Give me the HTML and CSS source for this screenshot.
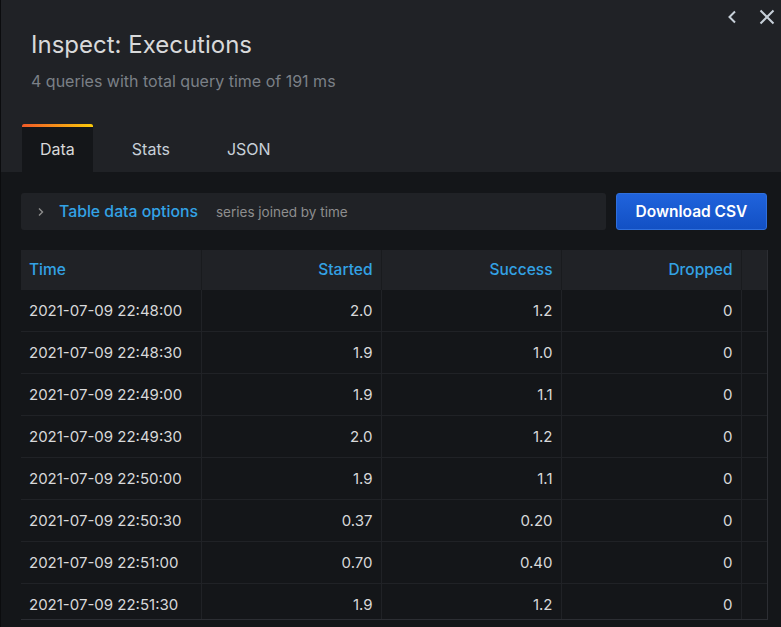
FILE: index.html
```html
<!DOCTYPE html>
<html>
<head>
<meta charset="utf-8">
<link rel="stylesheet" href="styles.css">
</head>
<body>
<div class="drawer">
  <div class="header">
    <div class="actions">
      <svg class="icon" width="16" height="16" viewBox="0 0 16 16"><path d="M11 2.5 L5.5 8 L11 13.5" fill="none" stroke="#c7d0d9" stroke-width="2"/></svg>
      <svg class="icon" width="16" height="16" viewBox="0 0 16 16"><path d="M1.5 1.5 L14.5 14.5 M14.5 1.5 L1.5 14.5" fill="none" stroke="#c7d0d9" stroke-width="2"/></svg>
    </div>
    <h1 class="title">Inspect: Executions</h1>
    <div class="subtitle">4 queries with total query time of 191 ms</div>
    <div class="tabs">
      <div class="tab active">Data</div>
      <div class="tab">Stats</div>
      <div class="tab">JSON</div>
    </div>
  </div>
  <div class="content">
    <div class="toolbar">
      <div class="options">
        <svg class="chev" width="8" height="10" viewBox="0 0 8 10"><path d="M2 1.5 L5.5 5 L2 8.5" fill="none" stroke="#8e8e8e" stroke-width="1.4"/></svg>
        <span class="opt-title">Table data options</span>
        <span class="opt-desc">series joined by time</span>
      </div>
      <button class="btn">Download CSV</button>
    </div>
    <div class="table-wrap">
      <table class="grid">
        <thead>
          <tr><th class="left">Time</th><th>Started</th><th>Success</th><th>Dropped</th><th class="pad"></th></tr>
        </thead>
        <tbody>
          <tr><td class="left">2021-07-09 22:48:00</td><td>2.0</td><td>1.2</td><td>0</td><td class="pad"></td></tr>
          <tr><td class="left">2021-07-09 22:48:30</td><td>1.9</td><td>1.0</td><td>0</td><td class="pad"></td></tr>
          <tr><td class="left">2021-07-09 22:49:00</td><td>1.9</td><td>1.1</td><td>0</td><td class="pad"></td></tr>
          <tr><td class="left">2021-07-09 22:49:30</td><td>2.0</td><td>1.2</td><td>0</td><td class="pad"></td></tr>
          <tr><td class="left">2021-07-09 22:50:00</td><td>1.9</td><td>1.1</td><td>0</td><td class="pad"></td></tr>
          <tr><td class="left">2021-07-09 22:50:30</td><td>0.37</td><td>0.20</td><td>0</td><td class="pad"></td></tr>
          <tr><td class="left">2021-07-09 22:51:00</td><td>0.70</td><td>0.40</td><td>0</td><td class="pad"></td></tr>
          <tr><td class="left">2021-07-09 22:51:30</td><td>1.9</td><td>1.2</td><td>0</td><td class="pad"></td></tr>
        </tbody>
      </table>
    </div>
  </div>
</div>
</body>
</html>
```
FILE: styles.css
```css
* { box-sizing: border-box; }
html, body { margin: 0; padding: 0; background: #141619; }
body { font-family: Inter, Roboto, "Noto Sans", sans-serif; color: #d8d9da; }
.drawer { height: 627px; display: flex; flex-direction: column; border-left: 1px solid #0b0c0e; overflow: hidden; }
.header { background: #202226; position: relative; height: 172px; padding: 29px 0 0 30px; display: flex; flex-direction: column; }
.actions { position: absolute; top: 9px; right: 6px; display: flex; gap: 19px; align-items: center; }
.icon { display: block; }
.title { margin: 0; font-size: 24px; font-weight: 400; line-height: 32px; color: #d8d9da; }
.subtitle { margin-top: 10px; font-size: 16px; line-height: 20px; color: #7b8087; }
.tabs { margin-top: auto; margin-left: -9px; display: flex; gap: 21px; height: 48px; }
.tab { padding: 3px 18px 0; font-size: 16px; line-height: 45px; color: #c7d0d9; }
.tab.active { background: #141619; color: #d8d9da; position: relative; }
.tab.active::before { content: ""; position: absolute; left: 0; right: 0; top: 0; height: 3px; background: linear-gradient(90deg, #f05a28, #fbca0a); border-radius: 2px 2px 0 0; }
.content { padding: 21px 14px 0 20px; flex: 1; display: flex; flex-direction: column; }
.toolbar { display: flex; gap: 10px; height: 37px; }
.options { flex: 1; background: #202226; border-radius: 3px; display: flex; align-items: center; padding-left: 16px; }
.chev { margin-right: 14px; }
.opt-title { color: #33a2e5; font-size: 15.8px; font-weight: 500; }
.opt-desc { color: #8e8e8e; font-size: 13.5px; margin-left: 18px; }
.btn { width: 151px; border: 1px solid #2f6fdc; border-radius: 3px; background: linear-gradient(180deg, #2063dc, #1250c4); color: #fff; font-family: inherit; font-size: 15.5px; font-weight: 600; padding: 0; }
.table-wrap { margin-top: 20px; height: 370px; overflow: hidden; border-right: 1px solid #2c2e33; border-bottom: 1px solid #2c2e33; width: 747px; }
.grid { border-collapse: collapse; table-layout: fixed; width: 746px; font-size: 15px; }
.grid th, .grid td { width: 180px; padding: 0 8px; text-align: right; border-right: 1px solid #202226; }
.grid th.pad, .grid td.pad { width: 26px; border-right: none; }
.grid th { height: 39px; background: #202226; color: #33a2e5; font-size: 15.5px; font-weight: 500; border-right-color: #191b1e; }
.grid td { height: 42px; border-top: 1px solid #202226; color: #d8d9da; }
.grid .left { text-align: left; }
```
